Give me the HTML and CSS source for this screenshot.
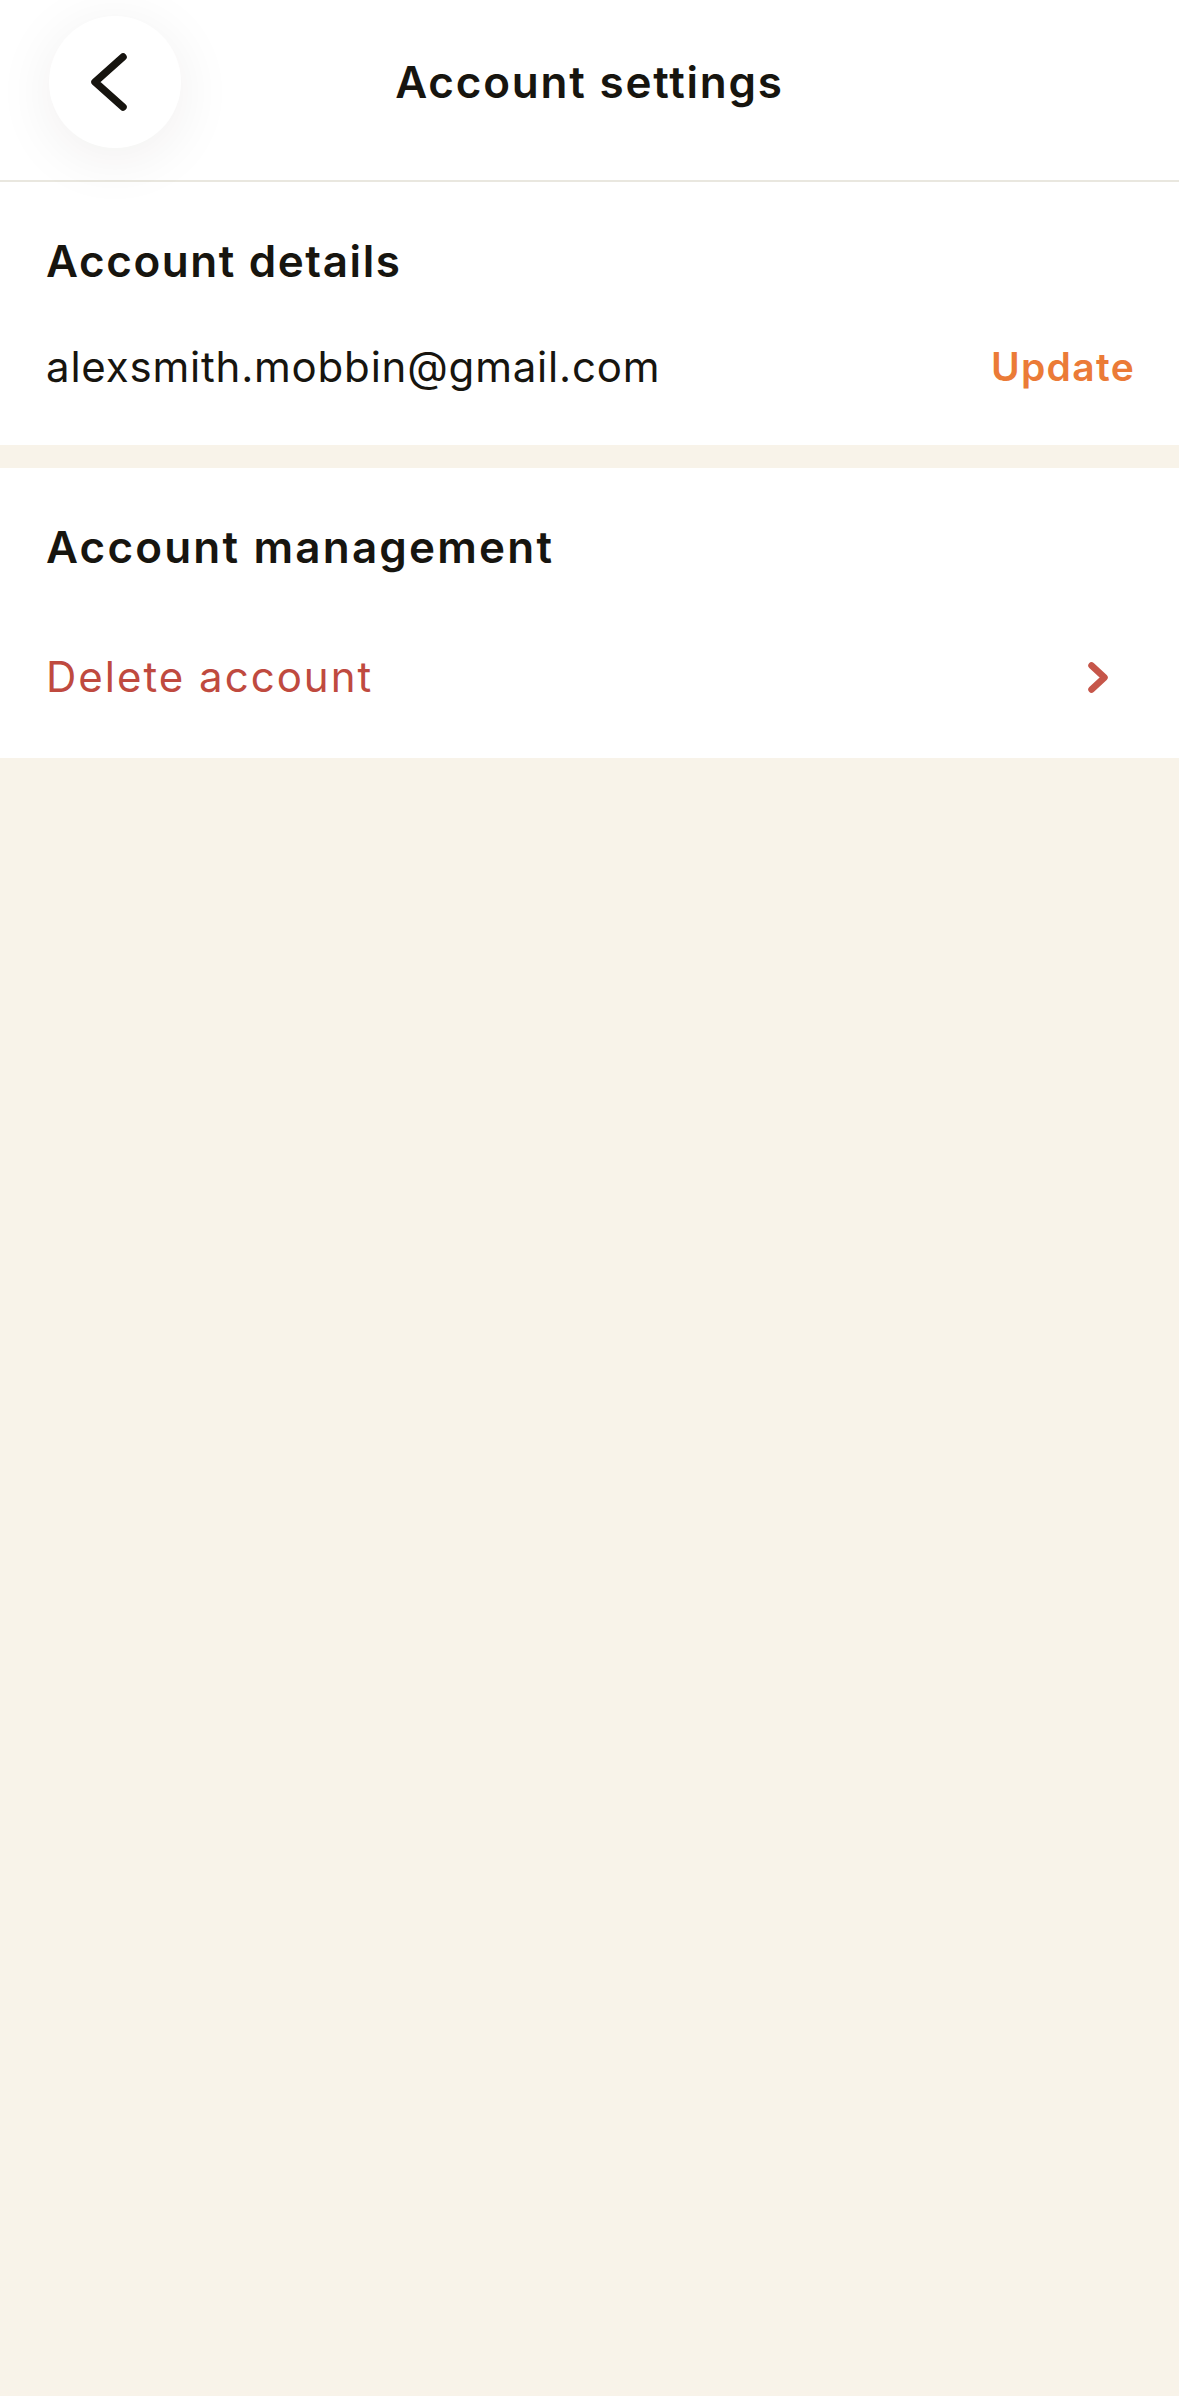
FILE: index.html
```html
<!DOCTYPE html>
<html lang="en">
<head>
<meta charset="utf-8">
<title>Account settings</title>
<link rel="stylesheet" href="styles.css">
</head>
<body>
<div class="screen">
  <header class="topbar">
    <div class="topbar-left">
      <button class="back-btn" aria-label="Back">
        <svg width="132" height="132" viewBox="0 0 132 132" aria-hidden="true">
          <path d="M74 41 L46 66 L74 91" fill="none" stroke="#16140f" stroke-width="7.5" stroke-linecap="round" stroke-linejoin="round"/>
        </svg>
      </button>
    </div>
    <h1 class="topbar-title">Account settings</h1>
    <div class="topbar-right"></div>
  </header>

  <section class="card card-details">
    <h2 class="card-heading">Account details</h2>
    <div class="row row-email">
      <span class="email">alexsmith.mobbin@gmail.com</span>
      <a class="update-link">Update</a>
    </div>
  </section>

  <div class="spacer"></div>

  <section class="card card-manage">
    <h2 class="card-heading card-heading-wide">Account management</h2>
    <div class="row row-delete">
      <span class="delete-text">Delete account</span>
      <svg class="chev" width="20" height="31" viewBox="0 0 20 31" aria-hidden="true">
        <path d="M3.5 3.5 L16.5 15.5 L3.5 27.5" fill="none" stroke="#c6564a" stroke-width="6.5" stroke-linecap="round" stroke-linejoin="round"/>
      </svg>
    </div>
  </section>
</div>
</body>
</html>
```

FILE: styles.css
```css
* {
  box-sizing: border-box;
}

html, body {
  margin: 0;
  padding: 0;
  background: #f8f3e9;
}

body {
  font-family: Inter, "Noto Sans", "Liberation Sans", sans-serif;
  color: #17150f;
  width: 1179px;
  min-height: 2396px;
}

.screen {
  display: flex;
  flex-direction: column;
  min-height: 2396px;
  background: #f8f3e9;
}

.topbar {
  position: relative;
  z-index: 1;
  height: 182px;
  background: #ffffff;
  border-bottom: 2px solid #e9e7df;
  display: grid;
  grid-template-columns: 1fr auto 1fr;
  align-items: center;
  padding-bottom: 16px;
}

.topbar-left {
  padding-left: 49px;
  display: flex;
  align-items: center;
}

.back-btn {
  width: 132px;
  height: 132px;
  border: none;
  padding: 0;
  margin: 0;
  border-radius: 50%;
  background: #ffffff;
  box-shadow: 0 10px 60px rgba(40, 30, 10, 0.07);
  display: flex;
  align-items: center;
  justify-content: center;
}

.back-btn svg {
  display: block;
}

.topbar-title {
  margin: 0;
  font-size: 44px;
  font-weight: 600;
  line-height: 60px;
  letter-spacing: 1.8px;
  white-space: nowrap;
}

.card {
  background: #ffffff;
  padding: 0 44px 0 46px;
}

.card-details {
  padding-top: 49px;
  padding-bottom: 48px;
}

.card-manage {
  padding-top: 49px;
  padding-bottom: 51px;
}

.spacer {
  height: 23px;
}

.card-heading {
  margin: 0;
  font-size: 44px;
  font-weight: 600;
  line-height: 60px;
  letter-spacing: 1.6px;
}

.card-heading-wide {
  letter-spacing: 2.2px;
}

.row {
  display: flex;
  align-items: center;
  justify-content: space-between;
}

.row-email {
  margin-top: 46px;
  height: 60px;
}

.email {
  font-size: 42px;
  font-weight: 400;
  line-height: 60px;
  letter-spacing: 0.8px;
}

.update-link {
  font-size: 39px;
  font-weight: 600;
  color: #eb7b37;
  line-height: 60px;
  letter-spacing: 1.3px;
}

.row-delete {
  margin-top: 70px;
  height: 60px;
  padding-right: 27px;
}

.delete-text {
  font-size: 42px;
  font-weight: 400;
  line-height: 60px;
  color: #bf4a3f;
  letter-spacing: 2px;
}

.chev {
  display: block;
}
```
